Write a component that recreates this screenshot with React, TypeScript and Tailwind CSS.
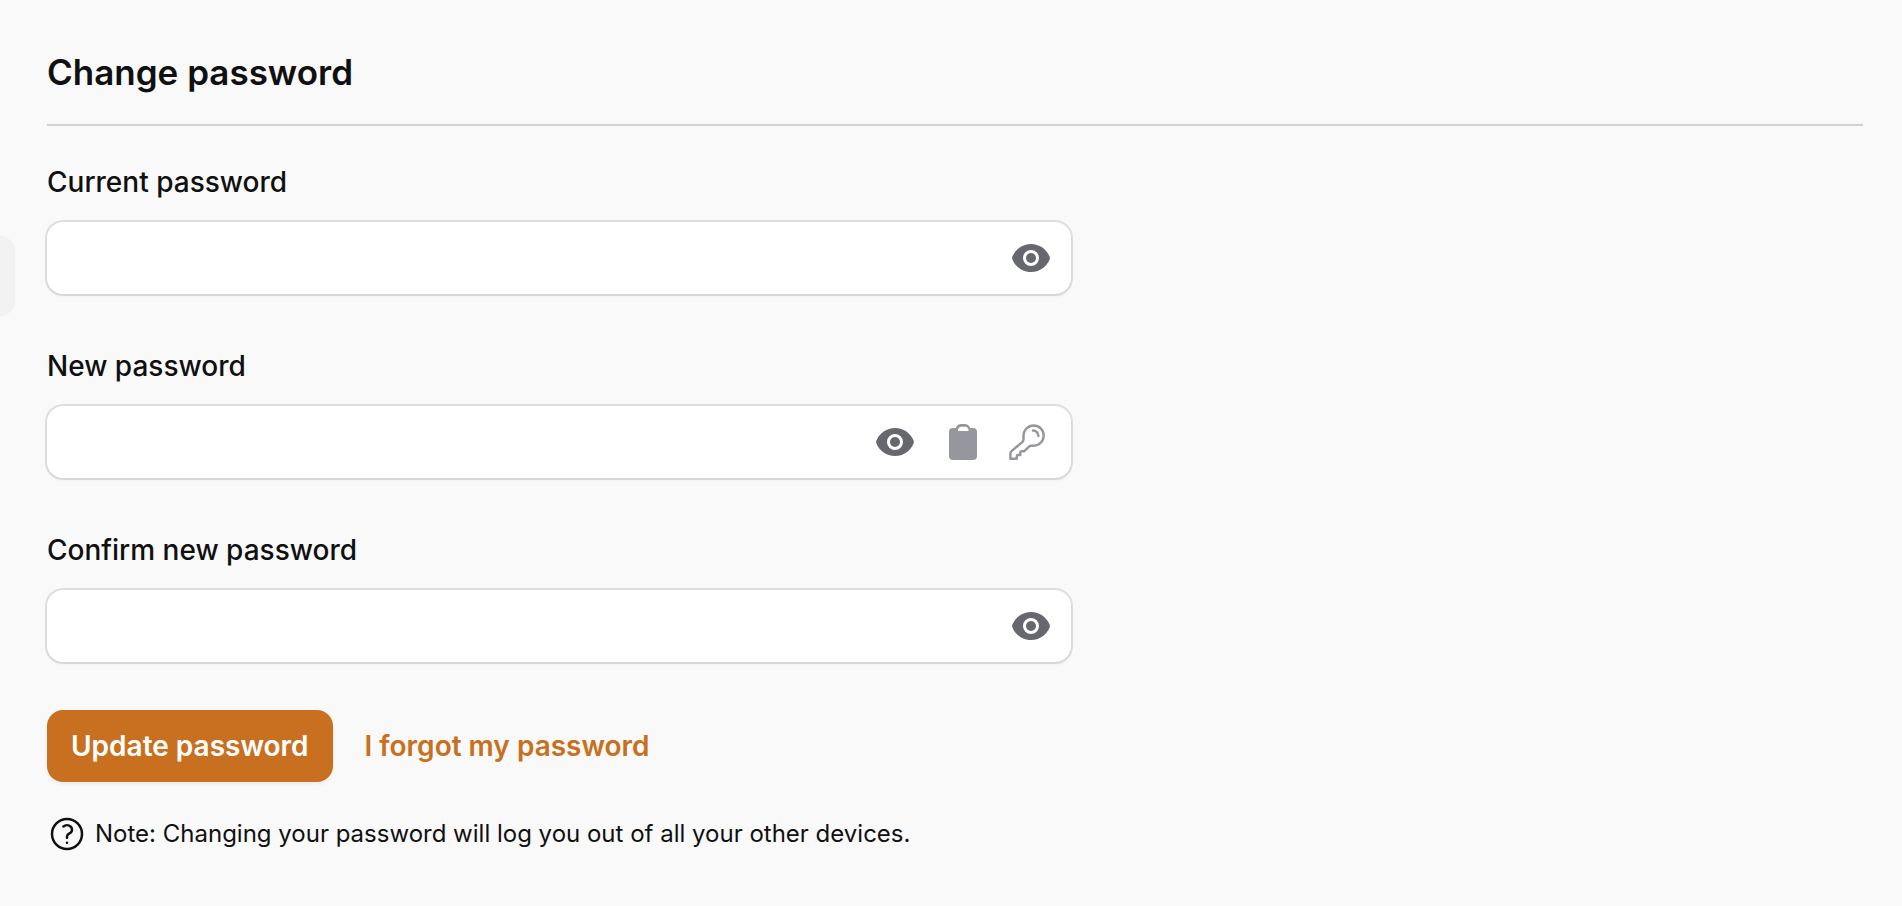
import type { ReactNode } from "react";

function EyeIcon() {
  return (
    <svg viewBox="0 0 20 20" fill="currentColor" className="size-10" aria-hidden="true">
      <path d="M10 12.5a2.5 2.5 0 1 0 0-5 2.5 2.5 0 0 0 0 5Z" />
      <path
        fillRule="evenodd"
        clipRule="evenodd"
        d="M.664 10.59a1.651 1.651 0 0 1 0-1.186A10.004 10.004 0 0 1 10 3c4.257 0 7.893 2.66 9.336 6.41.147.381.146.804 0 1.186A10.004 10.004 0 0 1 10 17c-4.257 0-7.893-2.66-9.336-6.41ZM14 10a4 4 0 1 1-8 0 4 4 0 0 1 8 0Z"
      />
    </svg>
  );
}

function ClipboardIcon() {
  return (
    <svg viewBox="0 0 40 40" fill="currentColor" className="size-10" aria-hidden="true">
      <path
        fillRule="evenodd"
        d="M12.800 6C13.700 3.500 15.800 2 18.200 2h3.600C24.200 2 26.300 3.500 27.200 6H30a4 4 0 0 1 4 4V34a4 4 0 0 1-4 4H10a4 4 0 0 1-4-4V10a4 4 0 0 1 4-4ZM18.500 4.800A3.500 3.500 0 0 0 15 9h10.500a3.500 3.500 0 0 0-3.500-4.200Z"
      />
    </svg>
  );
}

function KeyIcon() {
  return (
    <svg viewBox="0 0 40 40" fill="none" stroke="currentColor" strokeWidth="2.4" strokeLinejoin="round" strokeLinecap="round" className="size-10" aria-hidden="true">
      <path d="M26.600 3.500A10.200 10.200 0 0 0 16.500 13.700V17.500Q16.500 18.800 15.500 19.800L4.500 29.200Q3.400 30.200 3.400 31.500V36.700H9.800V34Q9.800 33 11 33H13.300V30.500Q13.300 29.300 14.500 29.300H17L22.300 24.300Q23 23.700 24 23.700H26.600A10.100 10.100 0 0 0 26.600 3.500Z" />
      <path d="M26 8.500A5.400 5.400 0 0 1 31.400 14" />
    </svg>
  );
}

function HelpIcon() {
  return (
    <svg viewBox="0 0 24 24" fill="none" stroke="currentColor" strokeWidth="1.5" strokeLinecap="round" strokeLinejoin="round" className="size-10 shrink-0" aria-hidden="true">
      <path d="M9.879 7.519c1.171-1.025 3.071-1.025 4.242 0 1.172 1.025 1.172 2.687 0 3.712-.203.179-.43.326-.67.442-.745.361-1.450.999-1.450 1.827v.750M21 12a9 9 0 1 1-18 0 9 9 0 0 1 18 0Zm-9 5.250h.008v.008H12v-.008Z" />
    </svg>
  );
}

function IconButton({ label, className, children }: { label: string; className: string; children: ReactNode }) {
  return (
    <button type="button" aria-label={label} className={className}>
      {children}
    </button>
  );
}

function PasswordField({ id, label, children }: { id: string; label: string; children?: ReactNode }) {
  return (
    <div>
      <label htmlFor={id} className="block text-[28px] leading-10 font-medium">
        {label}
      </label>
      <div className="mt-5 flex h-18 items-center rounded-2xl bg-white pr-5 shadow-[0_0_0_2px_rgba(0,0,0,0.1),0_2px_4px_rgba(0,0,0,0.05)]">
        <input id={id} type="password" className="h-full min-w-0 flex-1 rounded-2xl bg-transparent px-6 text-[28px] outline-none" />
        <IconButton label="Show password" className="text-[#67676f]">
          <EyeIcon />
        </IconButton>
        {children}
      </div>
    </div>
  );
}

export default function App() {
  return (
    <div className="relative min-h-screen bg-[#f9f9f9] pt-12 pr-[39px] pb-12 pl-[47px] font-['Inter',sans-serif] text-[#101010]">
      <div className="absolute top-[236px] left-0 h-20 w-[15px] rounded-r-2xl bg-[#f2f2f2]" />
      <main>
        <h1 className="border-b-2 border-[#d0d0d6] pb-7 text-[35px] leading-12 font-semibold">Change password</h1>
        <form className="pt-9">
          <div className="flex max-w-5xl flex-col gap-13">
            <PasswordField id="current-password" label="Current password" />
            <PasswordField id="new-password" label="New password">
              <IconButton label="Copy password" className="ml-7 text-[#96969f]">
                <ClipboardIcon />
              </IconButton>
              <IconButton label="Generate password" className="mr-1 ml-6 text-[#96969f]">
                <KeyIcon />
              </IconButton>
            </PasswordField>
            <PasswordField id="confirm-password" label="Confirm new password" />
          </div>
          <div className="mt-12 flex items-center gap-8">
            <button type="submit" className="h-18 rounded-2xl bg-[#c87020] px-6 text-[28px] leading-10 font-semibold text-white shadow-[0_2px_4px_rgba(0,0,0,0.06)]">
              Update password
            </button>
            <a href="#forgot" className="text-[28px] leading-10 font-semibold text-[#c87020]">
              I forgot my password
            </a>
          </div>
          <p className="mt-8 flex items-center gap-2 text-2xl leading-10">
            <HelpIcon />
            Note: Changing your password will log you out of all your other devices.
          </p>
        </form>
      </main>
    </div>
  );
}
